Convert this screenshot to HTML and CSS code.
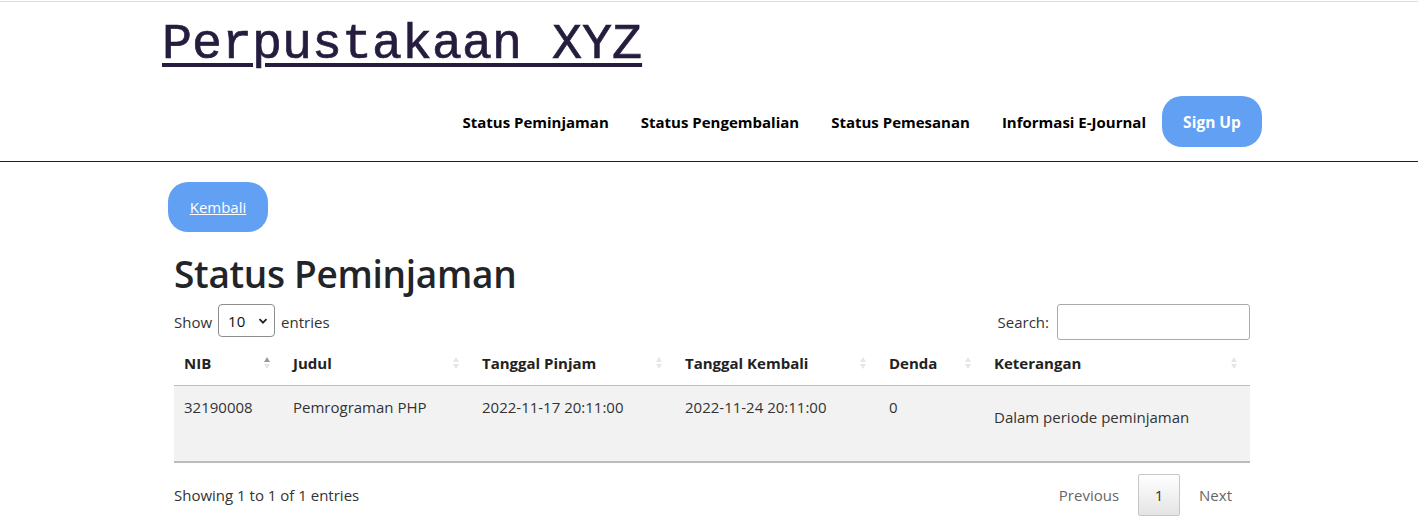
FILE: index.html
```html
<!DOCTYPE html>
<html lang="id">
<head>
<meta charset="utf-8">
<title>Status Peminjaman - Perpustakaan XYZ</title>
<link rel="stylesheet" href="styles.css">
</head>
<body>
<header class="site-header">
  <div class="header-inner">
    <h1 class="brand"><a href="#">Perpustakaan XYZ</a></h1>
    <nav class="main-nav">
      <a class="nav-link" href="#">Status Peminjaman</a>
      <a class="nav-link" href="#">Status Pengembalian</a>
      <a class="nav-link" href="#">Status Pemesanan</a>
      <a class="nav-link" href="#">Informasi E-Journal</a>
      <a class="btn-signup" href="#">Sign Up</a>
    </nav>
  </div>
</header>
<main class="content">
  <a class="btn-back" href="#">Kembali</a>
  <h2 class="page-title">Status Peminjaman</h2>
  <div class="dt-top">
    <label class="dt-length">Show
      <span class="select-box">10
        <svg class="chev" width="10" height="8" viewBox="0 0 10 8"><path d="M1.5 2.2 L5 5.7 L8.5 2.2" fill="none" stroke="#222" stroke-width="1.8"/></svg>
      </span>
      entries</label>
    <label class="dt-search">Search: <span class="search-input"></span></label>
  </div>
  <table class="dt-table">
    <thead>
      <tr>
        <th class="c-nib"><span>NIB</span><i class="sort asc"></i></th>
        <th class="c-judul"><span>Judul</span><i class="sort"></i></th>
        <th class="c-pinjam"><span>Tanggal Pinjam</span><i class="sort"></i></th>
        <th class="c-kembali"><span>Tanggal Kembali</span><i class="sort"></i></th>
        <th class="c-denda"><span>Denda</span><i class="sort"></i></th>
        <th class="c-ket"><span>Keterangan</span><i class="sort"></i></th>
      </tr>
    </thead>
    <tbody>
      <tr>
        <td>32190008</td>
        <td>Pemrograman PHP</td>
        <td>2022-11-17 20:11:00</td>
        <td>2022-11-24 20:11:00</td>
        <td>0</td>
        <td><p class="ket">Dalam periode peminjaman</p></td>
      </tr>
    </tbody>
  </table>
  <div class="dt-bottom">
    <div class="dt-info">Showing 1 to 1 of 1 entries</div>
    <div class="dt-paging">
      <span class="pg-btn disabled">Previous</span>
      <span class="pg-btn current">1</span>
      <span class="pg-btn disabled">Next</span>
    </div>
  </div>
</main>
</body>
</html>
```
FILE: styles.css
```css
html, body {
  margin: 0;
  padding: 0;
  background: #fff;
}
body {
  font-family: "Open Sans", "Noto Sans", sans-serif;
  color: #212529;
  font-size: 15px;
}

.site-header {
  margin-top: 1px;
  border-top: 1px solid #dedede;
  border-bottom: 1px solid #222;
}
.header-inner {
  width: 1100px;
  margin: 0 auto;
  padding-bottom: 14px;
  position: relative;
  left: 3px;
}
.brand {
  margin: 0;
  padding-top: 15px;
  height: 94px;
  box-sizing: border-box;
  font-family: "Liberation Mono", "Courier New", monospace;
  font-size: 50px;
  font-weight: normal;
  line-height: 56px;
}
.brand a {
  color: #261d3e;
  text-decoration: underline;
  text-decoration-thickness: 4px;
  text-underline-offset: 5px;
  -webkit-text-stroke: 0.7px #261d3e;
}
.main-nav {
  display: flex;
  justify-content: flex-end;
  align-items: center;
}
.nav-link {
  padding: 0 16px;
  font-weight: 700;
  font-size: 15px;
  color: #000;
  text-decoration: none;
}
.btn-signup {
  display: flex;
  align-items: center;
  justify-content: center;
  width: 100px;
  height: 51px;
  border-radius: 20px;
  background: #62a0f4;
  color: #fff;
  font-weight: 700;
  font-size: 15.5px;
  text-decoration: none;
}

.content {
  width: 1076px;
  margin: 0 auto;
  padding-top: 20px;
  position: relative;
  left: 3px;
}
.btn-back {
  display: flex;
  align-items: center;
  justify-content: center;
  width: 100px;
  height: 50px;
  margin-left: -6px;
  border-radius: 20px;
  background: #62a0f4;
  color: #fff;
  font-size: 15px;
  text-decoration: underline;
}
.page-title {
  margin: 18px 0 6px;
  font-size: 37px;
  font-weight: 600;
  line-height: 48px;
  letter-spacing: -0.3px;
}

.dt-top {
  display: flex;
  justify-content: space-between;
  align-items: center;
  height: 36px;
}
.dt-length, .dt-search {
  display: flex;
  align-items: center;
  gap: 6px;
  color: #333;
  font-size: 15px;
}
.select-box {
  display: flex;
  align-items: center;
  justify-content: space-between;
  box-sizing: border-box;
  width: 57px;
  height: 33px;
  margin-top: -3px;
  padding: 0 6px 0 9px;
  border: 1px solid #8d8d8d;
  border-radius: 4px;
  color: #111;
  font-size: 15px;
}
.search-input {
  display: block;
  box-sizing: border-box;
  width: 193px;
  height: 36px;
  margin-left: 2px;
  border: 1px solid #aaa;
  border-radius: 3px;
}

.dt-table {
  width: 100%;
  margin-top: 2px;
  border-collapse: collapse;
  table-layout: fixed;
}
.dt-table th {
  position: relative;
  box-sizing: border-box;
  height: 43px;
  padding: 0 10px;
  text-align: left;
  font-weight: 700;
  font-size: 15px;
  color: #222;
  border-bottom: 1px solid #bdbdbd;
}
.c-nib { width: 109px; }
.c-judul { width: 189px; }
.c-pinjam { width: 203px; }
.c-kembali { width: 204px; }
.c-denda { width: 105px; }
.sort {
  position: absolute;
  right: 12px;
  top: 50%;
  width: 7px;
  height: 14px;
  margin-top: -7px;
}
.sort::before, .sort::after {
  content: "";
  position: absolute;
  left: 0;
  border-left: 3.5px solid transparent;
  border-right: 3.5px solid transparent;
}
.sort::before {
  top: 1px;
  border-bottom: 5px solid #e6e6e6;
}
.sort::after {
  bottom: 1px;
  border-top: 5px solid #e6e6e6;
}
.sort.asc::before {
  border-bottom-color: #9a9a9a;
}
.dt-table td {
  height: 77px;
  padding: 11px 10px 0;
  vertical-align: top;
  background: #f2f2f2;
  color: #333;
  font-size: 15px;
  border-bottom: 2px solid #bcbcbc;
  box-sizing: border-box;
}
.ket {
  margin: 10px 0 0;
}

.dt-bottom {
  display: flex;
  justify-content: space-between;
  align-items: center;
  margin-top: 11px;
}
.dt-info {
  color: #333;
  font-size: 15px;
}
.dt-paging {
  display: flex;
  align-items: center;
}
.pg-btn {
  display: flex;
  align-items: center;
  justify-content: center;
  box-sizing: border-box;
  height: 42px;
  padding: 0 18px;
  font-size: 15px;
  color: #666;
}
.pg-btn.current {
  width: 42px;
  padding: 0;
  margin: 0 1px;
  border: 1px solid #c6c6c6;
  border-radius: 2px;
  background: linear-gradient(#fff, #e4e4e4);
  color: #333;
}
```
